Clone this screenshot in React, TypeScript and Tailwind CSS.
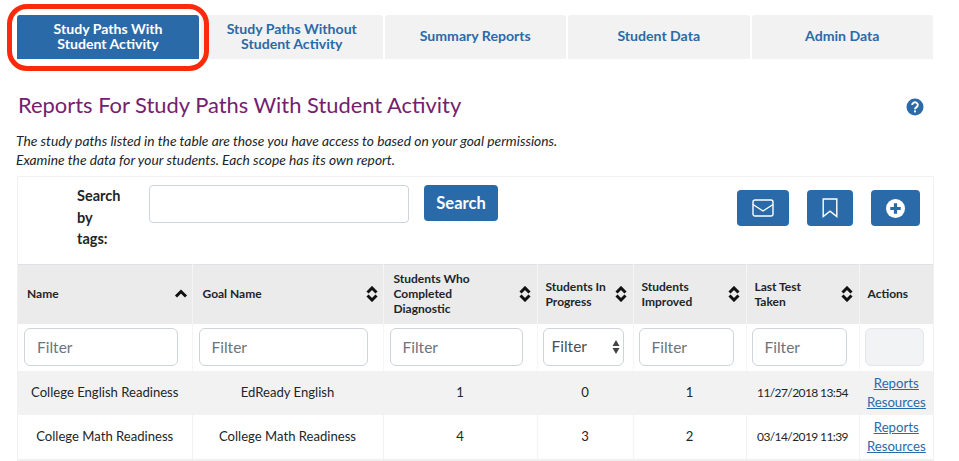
const tabs = [
  "Study Paths Without Student Activity",
  "Summary Reports",
  "Student Data",
  "Admin Data",
];

const columns = [
  { label: "Name", width: "w-[174px]", pad: "pl-[9px] pr-[4px]", filter: "ml-[6px] w-[154px]", sort: "up" },
  { label: "Goal Name", width: "w-[191px]", pad: "pl-[10px] pr-[4px]", filter: "ml-[6px] w-[169px]" },
  { label: "Students Who Completed Diagnostic", width: "w-[154px]", pad: "pl-[10px] pr-[5px]", filter: "ml-[6px] w-[133px]" },
  { label: "Students In Progress", width: "w-[96px]", pad: "pl-[8px] pr-[5px]", filter: "select" },
  { label: "Students Improved", width: "w-[113px]", pad: "pl-[8px] pr-[5px]", filter: "ml-[5px] w-[95px]" },
  { label: "Last Test Taken", width: "w-[113px]", pad: "pl-[8px] pr-[5px]", filter: "ml-[5px] w-[95px]", narrow: true },
  { label: "Actions", width: "w-[74px]", pad: "pl-[8px] pr-[5px]", filter: "disabled", sort: "none" },
];

const rows = [
  ["College English Readiness", "EdReady English", "1", "0", "1", "11/27/2018 13:54"],
  ["College Math Readiness", "College Math Readiness", "4", "3", "2", "03/14/2019 11:39"],
];

function SortIcon({ up }: { up?: boolean }) {
  return (
    <svg viewBox="0 0 14 16" className="h-[16px] w-[14px] shrink-0" fill="none" stroke="#111" strokeWidth="3">
      <path d={up ? "M2 10.5 7 5.5l5 5" : "M2.5 6.5 7 2l4.5 4.5M2.5 9.5 7 14l4.5-4.5"} />
    </svg>
  );
}

function IconButton({ width, children }: { width: string; children: React.ReactNode }) {
  return (
    <button type="button" className={`flex h-[36px] items-center justify-center rounded-[4px] bg-[#2b6aa9] ${width}`}>
      {children}
    </button>
  );
}

export default function App() {
  return (
    <div className="h-[461px] w-[959px] overflow-hidden bg-white pl-[17px] pt-[15px] font-[Lato,sans-serif] text-[#212529]">
      <div className="flex w-[916px] gap-[2px]">
        <div className="relative flex h-[44px] w-[182px] items-center justify-center rounded-t-[3px] bg-[#2b6aa9] pb-[2px] text-center text-[14.1px] font-bold leading-[15.5px] text-white">
          Study Paths With
          <br />
          Student Activity
          <span className="absolute -bottom-[12px] -left-[10px] -right-[10px] -top-[11px] rounded-[20px] border-[5px] border-[#fb2a0d]" />
        </div>
        {tabs.map((tab) => (
          <div
            key={tab}
            className="flex h-[44px] flex-1 items-center justify-center rounded-t-[3px] bg-[#f2f2f2] px-[20px] pb-[2px] text-center text-[14.1px] font-bold leading-[15.5px] text-[#2b6aa9]"
          >
            {tab}
          </div>
        ))}
      </div>

      <div className="mt-[32px] flex w-[907px] items-center justify-between pl-[1px]">
        <h1 className="text-[21.9px] leading-[27px] text-[#74206f]">Reports For Study Paths With Student Activity</h1>
        <svg viewBox="0 0 18 18" className="mt-[5px] h-[18px] w-[18px]">
          <circle cx="9" cy="9" r="8.5" fill="#2b6aa9" />
          <path d="M6.2 7a2.8 2.6 0 1 1 4.4 2.1c-1 .7-1.6 1.1-1.6 2.2" fill="none" stroke="#fff" strokeWidth="2" />
          <rect x="8" y="12.4" width="2" height="2" fill="#fff" />
        </svg>
      </div>

      <p className="-ml-[1px] mt-[13px] text-[13.8px] italic leading-[19px] text-[#212529]">
        The study paths listed in the table are those you have access to based on your goal permissions.
        <br />
        Examine the data for your students. Each scope has its own report.
      </p>

      <div className="mt-[7px] w-[917px] border-l border-r border-t border-[#f1f1f1]">
        <div className="flex h-[87px]">
          <div className="ml-[59px] mt-[8px] w-[50px] text-[14.5px] font-bold leading-[21.5px]">
            Search
            <br />
            by
            <br />
            tags:
          </div>
          <input className="ml-[22px] mt-[8px] h-[38px] w-[260px] rounded-[4px] border border-[#ced4da] bg-white" />
          <button
            type="button"
            className="ml-[15px] mt-[8px] h-[36px] w-[74px] rounded-[4px] bg-[#2b6aa9] text-[16.5px] font-bold text-white"
          >
            Search
          </button>
          <div className="ml-[239px] mt-[13px] flex gap-[18px]">
            <IconButton width="w-[52px]">
              <svg viewBox="0 0 22 18" className="h-[18px] w-[22px]" fill="none" stroke="#fff" strokeWidth="1.4">
                <rect x="1" y="1" width="20" height="16" rx="2" />
                <path d="M1 5.5 11 12l10-6.5" />
              </svg>
            </IconButton>
            <IconButton width="w-[46px]">
              <svg viewBox="0 0 16 20" className="h-[20px] w-[16px]" fill="none" stroke="#fff" strokeWidth="1.4">
                <path d="M1.2 1h13.6v17.5L8 13.2 1.2 18.5z" />
              </svg>
            </IconButton>
            <IconButton width="w-[49px]">
              <svg viewBox="0 0 20 20" className="h-[19px] w-[19px]">
                <circle cx="10" cy="10" r="10" fill="#fff" />
                <path d="M10 4.5v11M4.5 10h11" stroke="#2b6aa9" strokeWidth="3.4" />
              </svg>
            </IconButton>
          </div>
        </div>

        <table className="w-[915px] table-fixed border-collapse">
          <colgroup>
            {columns.map((col) => (
              <col key={col.label} className={col.width} />
            ))}
          </colgroup>
          <thead>
            <tr className="h-[59px] border-t border-[#dee2e6] bg-[#ebebeb]">
              {columns.map((col) => (
                <th key={col.label} className={`border-l border-[#f5f5f5] pb-[1px] text-left first:border-l-0 ${col.pad}`}>
                  <div className="flex items-center justify-between text-[12px] font-bold leading-[15px]">
                    <span className={col.narrow ? "max-w-[60px]" : "max-w-[84px]"}>{col.label}</span>
                    {col.sort !== "none" && <SortIcon up={col.sort === "up"} />}
                  </div>
                </th>
              ))}
            </tr>
            <tr className="h-[47px]">
              {columns.map((col) => (
                <td key={col.label} className="border-l border-[#f5f5f5] pt-[4px] align-top first:border-l-0">
                  {col.filter === "select" ? (
                    <div className="relative ml-[5px] w-[81px]">
                      <select className="h-[38px] w-full appearance-none rounded-[6px] border border-[#ced4da] bg-white pl-[8px] text-[15.5px] text-[#495057]">
                        <option>Filter</option>
                      </select>
                      <svg viewBox="0 0 8 14" className="absolute right-[4px] top-[12px] h-[14px] w-[8px]" fill="#444">
                        <path d="M4 0l3.5 6h-7zM4 14 .5 8h7z" />
                      </svg>
                    </div>
                  ) : col.filter === "disabled" ? (
                    <input disabled className="ml-[5px] h-[38px] w-[59px] rounded-[6px] border border-[#e3e6ea] bg-[#f1f3f5]" />
                  ) : (
                    <input
                      placeholder="Filter"
                      className={`h-[38px] rounded-[6px] border border-[#ced4da] bg-white pl-[12px] text-[15.5px] placeholder:text-[#6c757d] ${col.filter}`}
                    />
                  )}
                </td>
              ))}
            </tr>
          </thead>
          <tbody>
            {rows.map((row, i) => (
              <tr key={row[0]} className={`h-[44px] text-center text-[13.1px] ${i === 0 ? "bg-[#f2f2f2]" : "bg-white"}`}>
                {row.map((cell, j) => (
                  <td
                    key={j}
                    className={`border-l border-[#f2f2f2] px-0 first:border-l-0 ${j === 5 ? "text-[12px] tracking-[-0.6px]" : ""}`}
                  >
                    {cell}
                  </td>
                ))}
                <td className="border-l border-[#f2f2f2] text-[13.2px] leading-[19px] text-[#2b6aa9] underline">
                  <a className="block">Reports</a>
                  <a className="block">Resources</a>
                </td>
              </tr>
            ))}
          </tbody>
        </table>
        <div className="h-[2px] bg-[#f0f0f0]" />
      </div>
    </div>
  );
}
